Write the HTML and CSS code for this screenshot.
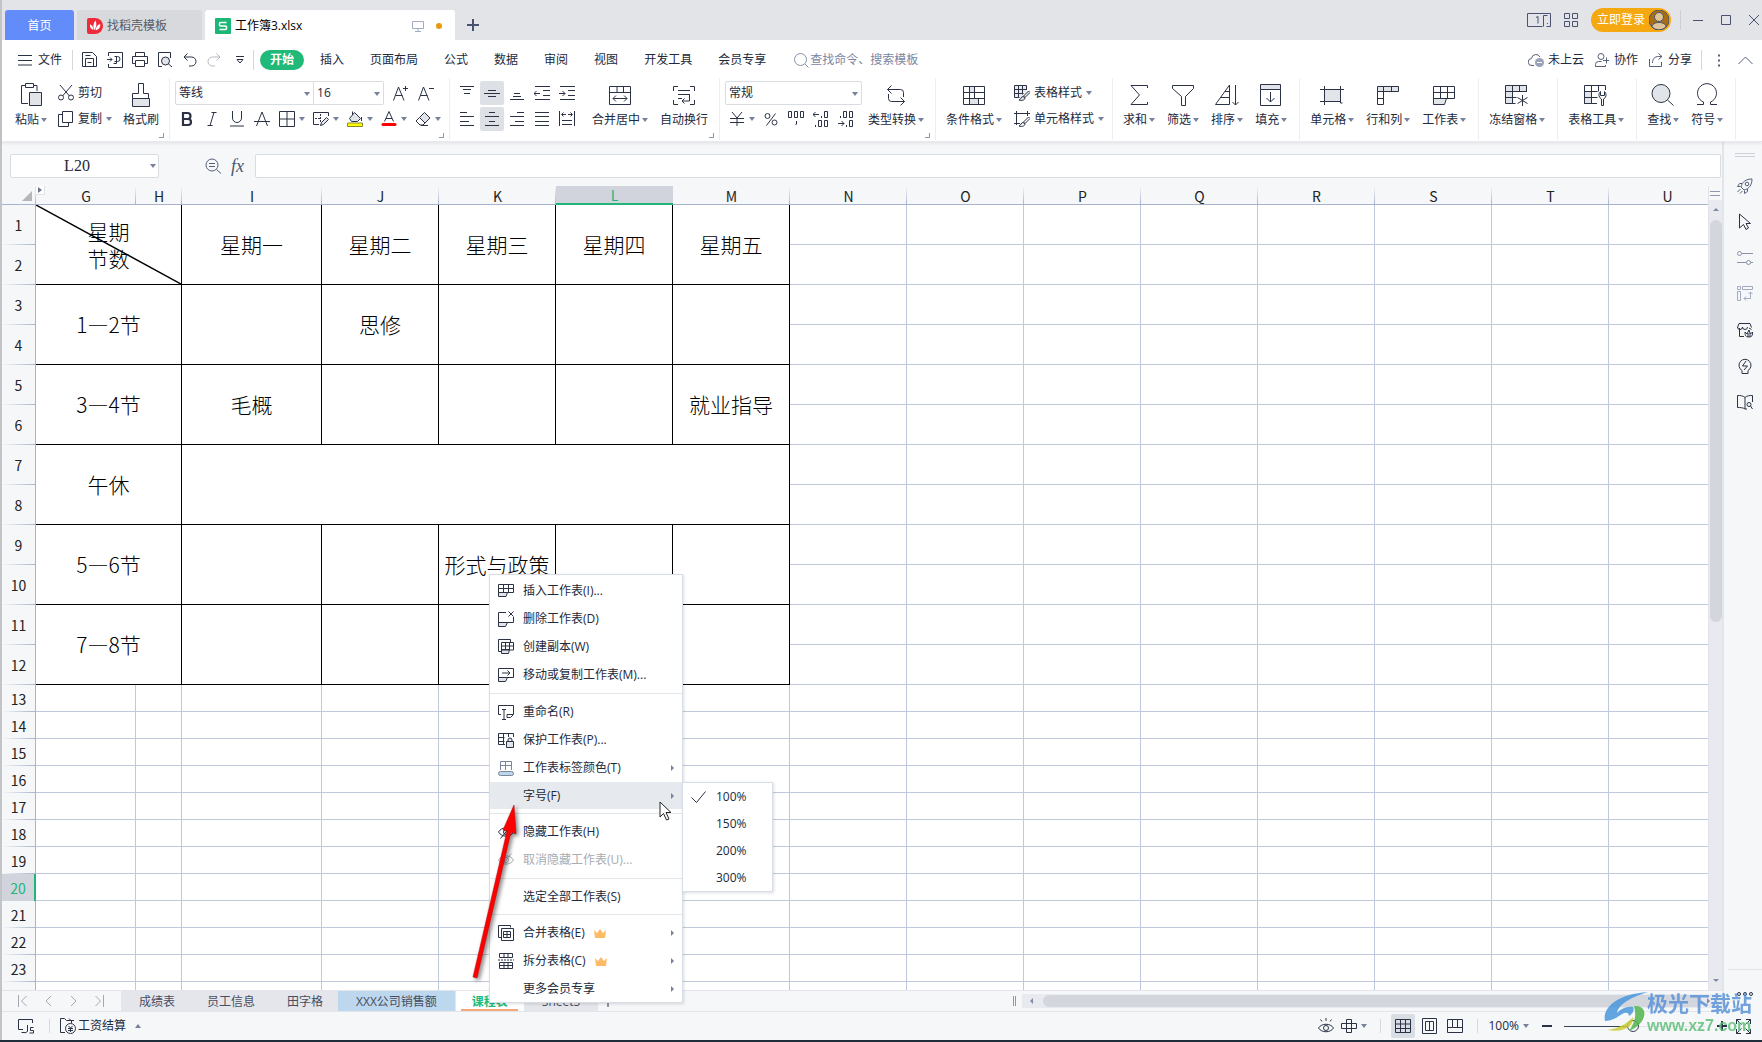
FILE: index.html
```html
<!DOCTYPE html>
<html lang="zh-CN">
<head>
<meta charset="utf-8">
<title>工作簿3.xlsx</title>
<link rel="stylesheet" href="styles.css">
</head>
<body>
<header class="titlebar">
  <nav class="doc-tabs">
    <button class="doc-tab home">首页</button>
    <button class="doc-tab docer"><svg class="plain" width="16" height="16"><path d="M0 2a2 2 0 0 1 2-2h6a8 8 0 0 1 0 16H2a2 2 0 0 1-2-2z" fill="#ef2b39"/><path d="M7.500 12C5.500 8.500 6.500 5 8.500 2.500c1.500 3 1 6.500-1 9.500zM6.500 12C3.500 11 2.700 9 3 6.300 5.200 7.300 6.300 9 6.500 12zM8.500 12.200c.3-3 2-5.500 4.700-6.200.3 3.500-1.500 5.800-4.700 6.200z" fill="#fff"/></svg>找稻壳模板</button>
    <button class="doc-tab current"><svg class="plain" width="16" height="16"><rect width="16" height="16" rx="1" fill="#1cb676"/><path d="M11.500 4.500h-6a1 1 0 0 0-1 1V7a1 1 0 0 0 1 1h5a1 1 0 0 1 1 1v1.500a1 1 0 0 1-1 1h-6" fill="none" stroke="#fff" stroke-width="1.500"/></svg><span class="doc-name">工作簿3.xlsx</span><svg width="12" height="12" class="pale"><path d="M.5 1.500h11v7H.5zM6 8.500v3M3 11.500h6"/></svg><i class="unsaved"></i></button>
  </nav>
  <button class="new-tab" aria-label="新建"><svg width="12" height="12"><path d="M6 0v12M0 6h12" stroke="#49536f" stroke-width="2"/></svg></button>
  <div class="window-tools slate">
    <button aria-label="窗口"><svg width="24" height="14"><path d="M15.500 13.500H.5V.5h23v13h-4M9 4.500l2-1v7M16.500 13.500v-11h4M20 10.500h1"/></svg></button>
    <button aria-label="应用"><svg width="14" height="14"><path d="M.5.5h5v5h-5zM8.500.5h5v5h-5zM.5 8.500h5v5h-5zM8.500 8.500h5v5h-5z"/></svg></button>
    <button class="login">立即登录<svg class="plain" width="20" height="20"><circle cx="10" cy="10" r="10" fill="#a96f10"/><circle cx="10" cy="7" r="4.500" fill="#dfc595"/><path d="M3 17c0-3 3-4.500 7-4.500s7 1.500 7 4.500a10 10 0 0 1-14 0z" fill="#dfc595"/></svg></button>
    <i class="rule"></i>
    <button aria-label="最小化"><svg width="10" height="10"><path d="M0 5.500h10"/></svg></button>
    <button aria-label="最大化"><svg width="10" height="10"><path d="M.5.5h9v9h-9z"/></svg></button>
    <button aria-label="关闭"><svg width="10" height="10"><path d="M0 0l10 10M10 0L0 10"/></svg></button>
  </div>
</header>

<div class="menubar">
  <button class="file"><svg width="14" height="12"><path d="M0 1.500h14M0 6.500h14M0 11h14"/></svg>文件</button>
  <i class="rule"></i>
  <div class="quick">
    <button aria-label="保存"><svg width="16" height="16"><path d="M.5.500h10l4 4v10H.5zM3.500 14.500v-8h8v8M3.500 3.500h5M5.500 10.500h4"/></svg></button>
    <button aria-label="输出为PDF"><svg width="16" height="16"><path d="M1.500 4V.5h14v15h-14V12M0 7.500h5M3 5.500l2 2-2 2M7.500 4.500h3a2 2 0 0 1 0 5h-3M9.500 5v6.500h-3"/></svg></button>
    <button aria-label="打印"><svg width="16" height="16"><path d="M3.500 4V.5h9V4M3.500 11.500h-3v-7h15v7h-3M3.500 8.500h9v6h-9z"/></svg></button>
    <button aria-label="打印预览"><svg width="16" height="16"><path d="M5 14.500H1.500V.5h12V6"/><circle cx="8.500" cy="9" r="4" fill="#e1e4e8"/><path d="M11.500 12l3.500 3"/></svg></button>
    <button aria-label="撤销"><svg width="14" height="14"><path d="M4.500.5L1 4l3.500 3.500M1 4h7.500a4.500 4.500 0 0 1 0 9H6"/></svg></button>
    <button aria-label="恢复" class="faint"><svg width="14" height="14"><path d="M9.500.5L13 4 9.500 7.500M13 4H5.500a4.500 4.500 0 0 0 0 9H8"/></svg></button>
    <button class="quick-more" aria-label="更多"><svg width="8" height="8"><path d="M0 .5h8M1 3.500h6L4 7z"/></svg></button>
  </div>
  <i class="rule"></i>
  <nav class="ribbon-tabs">
    <button class="on">开始</button><button>插入</button><button>页面布局</button><button>公式</button><button>数据</button><button>审阅</button><button>视图</button><button>开发工具</button><button>会员专享</button>
  </nav>
  <label class="search"><svg width="15" height="15"><circle cx="6.500" cy="6.500" r="6"/><path d="M11 11l3.500 3.500"/></svg><input type="text" aria-label="查找" placeholder="查找命令、搜索模板"></label>
  <div class="share">
    <button><svg width="16" height="14"><path d="M6 12.500H4a3.500 3.500 0 0 1-.5-7A4.500 4.500 0 0 1 12 4"/><circle cx="11.500" cy="9.500" r="4.500" fill="#9aa2b8" stroke="none"/><path d="M9 9.500h5" stroke="#fff"/></svg>未上云</button>
    <button><svg width="15" height="14"><circle cx="6" cy="3.500" r="3"/><path d="M.5 13.500v-2a3 3 0 0 1 3-3h3M.5 13.500h10V12M8 7.500h6M11.500 4.500v6"/></svg>协作</button>
    <button><svg width="15" height="14"><path d="M.5 6v7.500h12V9M3.500 10c0-4 2-6.500 6-6.500h3.500M9.500.5l3.500 3-3.500 3"/></svg>分享</button>
    <i class="rule"></i>
    <button aria-label="更多"><svg width="3" height="13" class="dots"><path d="M0 1.500h2M0 6.500h2M0 11.500h2" stroke-width="2"/></svg></button>
    <button aria-label="收起功能区"><svg width="15" height="9"><path d="M.5 8l7-7 7 7"/></svg></button>
  </div>
</div>

<div class="ribbon">
  <section class="group clip">
    <button class="big"><svg width="22" height="24"><path d="M8 20.500H1.500v-18h4M13 2.500h4V8M5.500.5h8v4h-8z"/><path d="M9.500 9.500h12v13h-12z" fill="#e1e4e8"/></svg><span>粘贴<i class="caret"></i></span></button>
    <div class="stack">
      <button class="small"><svg width="16" height="16"><path d="M2 0l9.500 11M14 0L4.500 11"/><circle cx="3" cy="12.500" r="2.500"/><circle cx="13" cy="12.500" r="2.500"/></svg>剪切</button>
      <button class="small"><svg width="16" height="16"><path d="M4.500.5h10v11h-10zM4.500 3.500h-4v12h10v-4"/></svg>复制<i class="caret"></i></button>
    </div>
    <button class="big"><svg width="18" height="24"><path d="M6.500.5h5v10h5v5H.5v-5h6z"/><path d="M.5 15.500h17v8H.5z" fill="#e1e4e8"/></svg><span>格式刷</span></button>
    <i class="launcher"></i>
  </section>
  <section class="group font">
    <div class="stack">
      <div class="line">
        <span class="combo face"><select aria-label="字体"><option>等线</option></select></span><span class="combo size"><select aria-label="字号"><option>16</option></select></span>
        <button class="tool" aria-label="增大字号"><svg width="16" height="16"><path d="M.5 15.500L5.500 2l5.500 13.500M2.500 10.500h7M10 3.500h5M12.500 1v5"/></svg></button>
        <button class="tool" aria-label="减小字号"><svg width="16" height="16"><path d="M.5 15.500L5.500 2l5.500 13.500M2.500 10.500h7M11 3.500h5"/></svg></button>
      </div>
      <div class="line">
        <button class="tool" aria-label="加粗"><svg width="16" height="16"><path d="M4 2h4.500a3 3 0 0 1 0 6H4zM4 8h5a3 3 0 0 1 0 6H4z" stroke-width="2.200"/></svg></button>
        <button class="tool" aria-label="倾斜"><svg width="16" height="16"><path d="M7.500 1.500h5M3.500 14.500h5M10 1.500l-4 13"/></svg></button>
        <button class="tool" aria-label="下划线"><svg width="16" height="16"><path d="M3.500 0v7a4.500 4.500 0 0 0 9 0V0M1 15h14"/></svg></button>
        <button class="tool" aria-label="删除线"><svg width="16" height="16"><path d="M2.500 15L8 1l5.500 14M0 10.500h16"/></svg></button>
        <button class="tool drop" aria-label="边框"><svg width="16" height="16"><path d="M.5.5h15v15H.5zM8 .5v15M.5 8h15"/></svg><i class="caret"></i></button>
        <button class="tool drop" aria-label="绘图边框"><svg width="16" height="16"><path d="M6 13.500H.5v-12h15V5"/><path d="M2 7.500h6M7.500 3v9" stroke-dasharray="2 1"/><path d="M7.500 14.500l1-3 5-5 2 2-5 5z" fill="#e1e4e8"/></svg><i class="caret"></i></button>
        <button class="tool drop" aria-label="填充颜色"><svg width="16" height="16"><path d="M2.500 7.500L7.500 1.500l6 6-3 3h-6z" fill="#e1e4e8"/><path d="M5.500 4V.5M14.500 6v4"/><path d="M.5 12h15v3.500H.5z" fill="#ff0" stroke="#8a8a30"/></svg><i class="caret"></i></button>
        <button class="tool drop" aria-label="字体颜色"><svg width="16" height="16"><path d="M3.500 10.500L8 .5l4.500 10M5 7.500h6"/><path d="M2 13.500h12" stroke="#f00" stroke-width="3" stroke-linecap="round"/></svg><i class="caret"></i></button>
        <button class="tool drop" aria-label="清除"><svg width="16" height="16"><path d="M4.500 6.500l5-5 5.500 5.500-5 5z" fill="#e1e4e8"/><path d="M4.500 6.500L1 10l4 4h3l2-2M6 14.500h7"/></svg><i class="caret"></i></button>
      </div>
    </div>
    <i class="launcher"></i>
  </section>
  <section class="group align">
    <div class="stack">
      <div class="line tight">
        <button class="tool" aria-label="顶端对齐"><svg width="16" height="16"><path d="M1 1.500h14M4 4.500h8M5 8.500h6"/></svg></button>
        <button class="tool on" aria-label="垂直居中"><svg width="16" height="16"><path d="M4 5.500h8M0 8.500h16M4 11.500h8"/></svg></button>
        <button class="tool" aria-label="底端对齐"><svg width="16" height="16"><path d="M5 8.500h6M4 11.500h8M1 14.500h14"/></svg></button>
        <button class="tool" aria-label="减少缩进"><svg width="16" height="16"><path d="M1 1.500h15M9 5.500h7M9 10.500h7M1 14.500h15M0 8.500h6M2.500 6L0 8.500 2.500 11"/></svg></button>
        <button class="tool" aria-label="增加缩进"><svg width="16" height="16"><path d="M1 1.500h15M9 5.500h7M9 10.500h7M1 14.500h15M0 8.500h6M3.500 6L6 8.500 3.500 11"/></svg></button>
      </div>
      <div class="line tight">
        <button class="tool" aria-label="左对齐"><svg width="16" height="16"><path d="M1 1.500h7M1 5.500h14M1 10.500h9M1 14.500h14"/></svg></button>
        <button class="tool on" aria-label="水平居中"><svg width="16" height="16"><path d="M5 1.500h6M1 5.500h14M5 10.500h6M1 14.500h14"/></svg></button>
        <button class="tool" aria-label="右对齐"><svg width="16" height="16"><path d="M8 1.500h7M1 5.500h14M6 10.500h9M1 14.500h14"/></svg></button>
        <button class="tool" aria-label="两端对齐"><svg width="16" height="16"><path d="M1 1.500h14M1 5.500h14M1 10.500h14M1 14.500h14"/></svg></button>
        <button class="tool" aria-label="分散对齐"><svg width="16" height="16"><path d="M.5 0v15M15.500 0v15M3 3.500h4M9 3.500h4M4.500 1.500l-2 2 2 2M11.500 1.500l2 2-2 2M3 9.500h10M3 13.500h10"/></svg></button>
      </div>
    </div>
    <button class="big"><svg width="22" height="24"><path d="M.5 3.500h21v18H.5zM.5 9.500h21M8 3.500v6M14.500 3.500v6M4 15.500h14M7 12.500l-3 3 3 3M15 12.500l3 3-3 3"/></svg><span>合并居中<i class="caret"></i></span></button>
    <button class="big"><svg width="22" height="24"><path d="M5 3.500H.5V8M17 3.500h4.500V8M5 21.500H.5V17M17 21.500h4.500V17M5 7.500h12M5 11.500h12M5 15.500h4M16.500 11.500V18H9M11.500 15.500L9 18l2.500 2.500"/></svg><span>自动换行</span></button>
    <i class="launcher"></i>
  </section>
  <section class="group number">
    <div class="stack">
      <span class="combo format"><select aria-label="数字格式"><option>常规</option></select></span>
      <div class="line tight">
        <button class="tool drop" aria-label="货币"><svg width="16" height="16"><path d="M3 1l5 6 5-6M1 7.500h14M1 11.500h14M8 7v8"/></svg><i class="caret"></i></button>
        <button class="tool" aria-label="百分比"><svg width="14" height="16"><circle cx="3.500" cy="5" r="2.500"/><circle cx="10.500" cy="11.500" r="2.500"/><path d="M11.500 2.500l-9 12"/></svg></button>
        <button class="tool" aria-label="千位分隔"><svg width="18" height="16"><path d="M1.500.5h3v6h-3zM7.500.5h3v6h-3zM13.500.5h3v6h-3zM9.500 10v3l-1 1"/></svg></button>
        <button class="tool" aria-label="增加小数"><svg width="16" height="16"><path d="M0 3.500h6M2.500 1L0 3.500 2.500 6M8.500 5v2M11.500.5h3v6h-3zM2.500 14v2M5.500 9.500h3v6h-3zM11.500 9.500h3v6h-3z"/></svg></button>
        <button class="tool" aria-label="减少小数"><svg width="16" height="16"><path d="M2.500 5v2M5.500.5h3v6h-3zM11.500.5h3v6h-3zM0 12.500h6M3.500 10L6 12.500 3.500 15M8.500 14v2M11.500 9.500h3v6h-3z"/></svg></button>
      </div>
    </div>
    <button class="big"><svg width="20" height="24"><path d="M5.500 2.500l-4 4 4 4M1.500 6.500h13a3 3 0 0 1 3 3V14M14.500 14.500l4 4-4 4M18.500 18.500h-13a3 3 0 0 1-3-3V11"/></svg><span>类型转换<i class="caret"></i></span></button>
    <i class="launcher"></i>
  </section>
  <section class="group format-styles">
    <button class="big"><svg width="22" height="24"><path d="M6.500 3.500h5v6h-5zM6.500 15.500h9v6h-9z" fill="#e1e4e8"/><path d="M.5 3.500h21v18H.5zM.5 9.500h21M.5 15.500h21M6.500 3.500v18M11.500 3.500v6M11.500 9.500v6M15.500 15.500v6"/></svg><span>条件格式<i class="caret"></i></span></button>
    <div class="stack">
      <button class="small"><svg width="16" height="16"><path d="M.5.5h12v12H.5z" fill="#e9ebee" stroke="none"/><path d="M9 16l-1-5 5-5h3v10z" fill="#fff" stroke="none"/><path d="M12.500 5V.500H.5v12h5M.5 4.500h12M.5 8.500h9M4.500.5v12M8.500.5v9"/><path d="M9.500 11l5-5 1.500 1.500-5 5zM9 11.500c-2 0-2 3-4 3.500 3 1 6 0 6-2z" fill="#e1e4e8"/></svg>表格样式<i class="caret"></i></button>
      <button class="small"><svg width="16" height="16"><path d="M2.500 0v14M0 2.500h16M13.500 0v5M0 12.500h6M9.500 11l5-5 1.500 1.500-5 5zM9 11.500c-2 0-2 3-4 3.500 3 1 6 0 6-2z"/></svg>单元格样式<i class="caret"></i></button>
    </div>
  </section>
  <section class="group">
    <button class="big"><svg width="18" height="24"><path d="M17.500 5V2.500H1l8.500 9.500L1 21.500h16.500V19"/></svg><span>求和<i class="caret"></i></span></button>
    <button class="big"><svg width="22" height="24"><path d="M.5 2.500h21v3l-8 8v9h-4v-9l-9-8z"/></svg><span>筛选<i class="caret"></i></span></button>
    <button class="big"><svg width="24" height="24"><path d="M.5 21.500L14.500 2v19.500zM10 8.500h4.500M6 14.500h8.500M20.500 2v20M17.500 19l3 3 3-3"/></svg><span>排序<i class="caret"></i></span></button>
    <button class="big"><svg width="22" height="24"><path d="M.5 1.500h20v5H.5z" fill="#e1e4e8"/><path d="M.5 6.500v16h20v-16M10.500 9v10M6.500 15l4 4 4-4"/></svg><span>填充<i class="caret"></i></span></button>
  </section>
  <section class="group">
    <button class="big"><svg width="24" height="24"><path d="M4.500 6.500h16v12h-16z" fill="#e1e4e8"/><path d="M0 6.500h24M0 18.500h18M4.500 3v19M20.500 3v13M20.500 18v2h2" /></svg><span>单元格<i class="caret"></i></span></button>
    <button class="big"><svg width="22" height="24"><path d="M.5 3.500h21v5H.5z" fill="#e1e4e8"/><path d="M.5 8.500v13h6v-18M14.500 3.500v5M.5 15.500h6"/></svg><span>行和列<i class="caret"></i></span></button>
    <button class="big"><svg width="22" height="24"><path d="M.5 15.500h13l-2 6H.5z" fill="#e1e4e8"/><path d="M.5 15.500v-12h21v12H.5M.5 9.500h21M7.500 3.500v12M14.500 3.500v12"/></svg><span>工作表<i class="caret"></i></span></button>
  </section>
  <section class="group">
    <button class="big"><svg width="24" height="24"><path d="M.5 2.500h21v6h-14v12h-7z" fill="#e1e4e8"/><path d="M.5 8.500h21v-6M.5 14.500h11M7.500 2.500v18h3M14.500 2.500v6M17.500 12v11M12.500 14.500l10 6M22.500 14.500l-10 6"/></svg><span>冻结窗格<i class="caret"></i></span></button>
  </section>
  <section class="group">
    <button class="big"><svg width="24" height="24"><path d="M.5 8.500h7v12h-7z" fill="#e1e4e8"/><path d="M13 20.500H.5v-18h21V7M.5 8.500h13M.5 14.500h13M7.500 2.500v18M14.500 2.500v6M17.500 22.500V16a4.500 4.500 0 0 1-1-7.500v4h4v-4a4.500 4.500 0 0 1-1 7.500v6.500z"/></svg><span>表格工具<i class="caret"></i></span></button>
  </section>
  <section class="group">
    <button class="big"><svg width="24" height="24"><circle cx="10" cy="10.500" r="9" fill="#e1e4e8"/><path d="M16.500 17l6 5.500"/></svg><span>查找<i class="caret"></i></span></button>
    <button class="big"><svg width="22" height="24"><path d="M1 21.500h6.500V19A9.500 9.500 0 1 1 14.500 19v2.500H21"/></svg><span>符号<i class="caret"></i></span></button>
  </section>
</div>

<div class="workspace">
  <main class="book">
    <div class="formula-bar">
      <span class="name-box"><input type="text" aria-label="名称框" value="L20"><i class="caret"></i></span>
      <button aria-label="公式查找"><svg width="16" height="16" class="soft"><circle cx="7" cy="7" r="6"/><path d="M11.500 11.500L16 15.500M4 5.500h6M4 8.500h6"/></svg></button>
      <button class="fx">fx</button>
      <input class="formula" type="text" aria-label="编辑栏">
    </div>
    <div class="sheet-area">
      <div class="sheet">
        <i class="unhide"><svg width="8" height="8" class="plain"><path d="M2 1v6l4-3z" fill="#6d7890"/></svg></i>
        <table>
          <colgroup><col class="c-head"><col class="c-g"><col class="c-h"><col class="c-i"><col span="12"></colgroup>
          <thead><tr><th class="corner"><svg width="10" height="10" class="plain"><path d="M10 0v10H0z" fill="#b4b6ba"/></svg></th><th>G<th>H<th>I<th>J<th>K<th class="sel">L<th>M<th>N<th>O<th>P<th>Q<th>R<th>S<th>T<th>U</tr></thead>
          <tbody class="timetable">
            <tr><th>1<td class="b slash" colspan="2" rowspan="2"><svg viewBox="0 0 100 100" preserveAspectRatio="none"><path d="M0 0l100 100"/></svg>星期<br>节数<td class="b" rowspan="2">星期一<td class="b" rowspan="2">星期二<td class="b" rowspan="2">星期三<td class="b" rowspan="2">星期四<td class="b" rowspan="2">星期五<td><td><td><td><td><td><td><td></tr>
            <tr><th>2<td><td><td><td><td><td><td><td></tr>
            <tr><th>3<td class="b" colspan="2" rowspan="2">1—2节<td class="b" rowspan="2"><td class="b" rowspan="2">思修<td class="b" rowspan="2"><td class="b" rowspan="2"><td class="b" rowspan="2"><td><td><td><td><td><td><td><td></tr>
            <tr><th>4<td><td><td><td><td><td><td><td></tr>
            <tr><th>5<td class="b" colspan="2" rowspan="2">3—4节<td class="b" rowspan="2">毛概<td class="b" rowspan="2"><td class="b" rowspan="2"><td class="b" rowspan="2"><td class="b" rowspan="2">就业指导<td><td><td><td><td><td><td><td></tr>
            <tr><th>6<td><td><td><td><td><td><td><td></tr>
            <tr><th>7<td class="b" colspan="2" rowspan="2">午休<td class="b" colspan="5" rowspan="2"><td><td><td><td><td><td><td><td></tr>
            <tr><th>8<td><td><td><td><td><td><td><td></tr>
            <tr><th>9<td class="b" colspan="2" rowspan="2">5—6节<td class="b" rowspan="2"><td class="b" rowspan="2"><td class="b" rowspan="2">形式与政策<td class="b" rowspan="2"><td class="b" rowspan="2"><td><td><td><td><td><td><td><td></tr>
            <tr><th>10<td><td><td><td><td><td><td><td></tr>
            <tr><th>11<td class="b" colspan="2" rowspan="2">7—8节<td class="b" rowspan="2"><td class="b" rowspan="2"><td class="b" rowspan="2"><td class="b" rowspan="2"><td class="b" rowspan="2"><td><td><td><td><td><td><td><td></tr>
            <tr><th>12<td><td><td><td><td><td><td><td></tr>
          </tbody>
          <tbody>
            <tr><th>13<td><td><td><td><td><td><td><td><td><td><td><td><td><td><td></tr>
            <tr><th>14<td><td><td><td><td><td><td><td><td><td><td><td><td><td><td></tr>
            <tr><th>15<td><td><td><td><td><td><td><td><td><td><td><td><td><td><td></tr>
            <tr><th>16<td><td><td><td><td><td><td><td><td><td><td><td><td><td><td></tr>
            <tr><th>17<td><td><td><td><td><td><td><td><td><td><td><td><td><td><td></tr>
            <tr><th>18<td><td><td><td><td><td><td><td><td><td><td><td><td><td><td></tr>
            <tr><th>19<td><td><td><td><td><td><td><td><td><td><td><td><td><td><td></tr>
            <tr><th class="sel">20<td><td><td><td><td><td><td><td><td><td><td><td><td><td><td></tr>
            <tr><th>21<td><td><td><td><td><td><td><td><td><td><td><td><td><td><td></tr>
            <tr><th>22<td><td><td><td><td><td><td><td><td><td><td><td><td><td><td></tr>
            <tr><th>23<td><td><td><td><td><td><td><td><td><td><td><td><td><td><td></tr>
            <tr><th><td><td><td><td><td><td><td><td><td><td><td><td><td><td><td></tr>
          </tbody>
        </table>
      </div>
      <div class="vscroll"><i class="split"></i><i class="up"></i><i class="thumb"></i><i class="down"></i></div>
    </div>
    <div class="sheet-bar">
      <div class="sheet-nav">
        <button aria-label="第一张"><svg width="9" height="12"><path d="M.5 0v12M8.500 1L3.500 6l5 5"/></svg></button>
        <button aria-label="上一张"><svg width="7" height="12"><path d="M6 1L1 6l5 5"/></svg></button>
        <button aria-label="下一张"><svg width="7" height="12"><path d="M1 1l5 5-5 5"/></svg></button>
        <button aria-label="最后一张"><svg width="9" height="12"><path d="M.5 1l5 5-5 5M8.500 0v12"/></svg></button>
      </div>
      <nav class="sheet-tabs">
        <button>成绩表</button><button>员工信息</button><button>田字格</button><button class="blue">XXX公司销售额</button><button class="active">课程表</button><button class="last">Sheet5</button>
      </nav>
      <button class="add" aria-label="新建工作表"><svg width="12" height="12"><path d="M6 0v12M0 6.500h12"/></svg></button>
      <div class="hscroll"><i class="grip"></i><div class="track"><i class="left"></i><i class="thumb"></i><i class="right"></i></div></div>
    </div>
  </main>
  <aside class="sidebar">
    <i class="handle"></i>
    <div class="side-tools">
      <button aria-label="快捷"><svg width="16" height="16" class="soft"><path d="M4 9C5 4 9 1 15 1c0 6-3 10-8 11zM5 5.500H2.500L.5 8.500h3M10.500 11v2.500l-3 2v-3"/><circle cx="10" cy="6" r="1.800"/><path d="M3.500 11l-3 3M5.500 13l-2.500 2.500"/></svg></button>
      <button aria-label="选择"><svg width="14" height="18"><path d="M1.500 1v14l4-3.500 2.500 5 2.500-1.500-2.500-4.500h4.500z"/></svg></button>
      <button aria-label="属性" class="mid"><svg width="16" height="16"><circle cx="2.500" cy="3.500" r="2"/><circle cx="11.500" cy="12.500" r="2"/><path d="M5 3.500h11M0 12.500h9M14 12.500h2"/></svg></button>
      <button aria-label="分析" class="pale"><svg width="16" height="16"><path d="M.5.5h3v3h-3zM.5 5.500h3v9h-3zM5.500.500h10v3h-10zM13.500 6v6.500H7M11.500 8l2-2 2 2M9 10.500l-2 2 2 2"/></svg></button>
      <button aria-label="稻壳资源"><svg width="16" height="16"><path d="M2.500 6v8.500H7M.5 5.500L2 1.500h11l1.500 4M.5 5a2.500 2.500 0 0 0 5 0 2.500 2.500 0 0 0 5 0M12 6l2.500 1.500"/><path d="M8 10c0 4 1 5 4 5s4-2 3.500-5l-2 2-1.500-4-2 4zM11 11v4M13 11v4"/></svg></button>
      <button aria-label="灵感"><svg width="16" height="16"><path d="M5 12.500a6 6 0 1 1 6 0v3H5zM9 3L5.500 8h5L7 12"/></svg></button>
      <button aria-label="帮助"><svg width="16" height="16"><path d="M8 3.500C6 1.500 3 1.500.5 1.500v12c2.500 0 5.500 0 7.500 1.500zM8 3.500c2-2 5-2 7.500-2V8M8 15h2"/><circle cx="12" cy="10.500" r="2"/><path d="M13.500 12l2 3"/></svg></button>
    </div>
    <button class="side-more" aria-label="更多"><svg width="16" height="4"><circle cx="2" cy="2" r="1.500"/><circle cx="8" cy="2" r="1.500"/><circle cx="14" cy="2" r="1.500"/></svg></button>
  </aside>
</div>

<footer class="statusbar">
  <button aria-label="宏"><svg width="17" height="16"><path d="M5 11.500H.5v-10h14V5M3.500 14.500H7M9.500 7v6.500L7 15M15.500 9.500h-3v3h3v2.500h-4"/></svg></button>
  <i class="rule"></i>
  <button class="payroll"><svg width="16" height="16"><path d="M5 14.500H.5V.5h4l2 2h5V5M9 .5l2 2h3"/><circle cx="10.500" cy="10.500" r="5"/><path d="M8.500 8l2 2 2-2M8 10.500h5M8 12.500h5M10.500 10.500V14"/></svg>工资结算</button><i class="caret flip"></i>
  <div class="view-tools">
    <button aria-label="护眼模式"><svg width="16" height="16"><path d="M.5 10c3-5 12-5 15 0-3 5-12 5-15 0zM8 0v3M2.500 1.500l1.500 2M13.500 1.500l-1.500 2"/><circle cx="8" cy="10" r="2.500"/></svg></button>
    <button class="cross" aria-label="阅读模式"><svg width="16" height="16"><path d="M5.500 1.500h5v13h-5zM.5 5.500h15v5H.5z"/></svg><i class="caret"></i></button>
    <i class="rule"></i>
    <button class="view on" aria-label="普通视图"><svg width="16" height="14"><path d="M.5.5h15v13H.5zM.5 5h15M.5 9.500h15M5.500.5v13M10.500.5v13"/></svg></button>
    <button class="view" aria-label="页面布局"><svg width="15" height="16"><path d="M.5.5h14v15H.5zM3.500 3.500h8v9h-8zM7.500 3.500v9"/></svg></button>
    <button class="view" aria-label="分页预览"><svg width="16" height="14"><path d="M.5.5h15v13H.5zM5.500.500v8h10M10.500.500v8M.5 8.500h5"/></svg></button>
    <i class="rule"></i>
    <button class="zoom-value">100%<i class="caret"></i></button>
    <button aria-label="缩小"><svg width="10" height="2"><path d="M0 1h10" stroke-width="2"/></svg></button>
    <input class="zoom" type="range" min="0" max="100" value="49" aria-label="显示比例">
    <button aria-label="放大"><svg width="10" height="10"><path d="M0 5h10M5 0v10" stroke-width="2"/></svg></button>
    <button aria-label="全屏"><svg width="15" height="15"><path d="M.5 5V.5H5M10 .5h4.500V5M14.500 10v4.500H10M5 14.500H.5V10M.5.500l5 5M14.500.500l-5 5M14.500 14.500l-5-5M.5 14.500l5-5"/></svg></button>
  </div>
</footer>

<div class="menu context">
  <button><svg width="16" height="16"><path d="M.5 9.500h9l-1.500 4H.5z" fill="#e1e4e8"/><path d="M.5 9.500v-8h15v8H.5M.5 5.500h15M5.500 1.500v8M10.500 1.500v8"/></svg>插入工作表(I)...</button>
  <button><svg width="16" height="16"><path d="M.5 11.500h9l-2 4h-7z" fill="#e1e4e8"/><path d="M8 1.500H.5v10h15V6M10.500.5l5 5M15.500.5l-5 5"/></svg>删除工作表(D)</button>
  <button><svg width="16" height="16"><path d="M3.500 10.500h8l-1 4h-7z" fill="#e1e4e8"/><path d="M3.500 12.500h-3V.5h12v3M3.500 3.500h12v7.500h-12zM3.500 7h12M7.500 3.500V11M11.500 3.500V11"/></svg>创建副本(W)</button>
  <button><svg width="16" height="16"><path d="M.5 10.500h9l-2 4h-7z" fill="#e1e4e8"/><path d="M.5 10.500v-9h15v9H.5M4 6h8M9.500 3.500L12 6 9.500 8.500"/></svg>移动或复制工作表(M)...</button>
  <hr>
  <button><svg width="16" height="16"><path d="M3 10.500H.5v-9h15v9l-3 3H9V10.500h6M6 5.500v10M4 5.500h4M4 15.500h4"/></svg>重命名(R)</button>
  <button><svg width="16" height="16"><path d="M7 12.500H.5v-11h15V5M.5 5.500h6M.5 9.500h6M5.500 1.500v11M10.500 1.500V5"/><path d="M8.500 9.500h7v6h-7zM10 9.500V8a2 2 0 0 1 4 0v1.500" fill="#e1e4e8"/></svg>保护工作表(P)...</button>
  <button><svg width="16" height="16"><path d="M2.500 10V1.500h11V10M2.500 5.500h11M7.500 1.500V10" stroke="#7c8498"/><rect x=".5" y="11.500" width="15" height="4" rx="2" fill="#bcd6ee" stroke="#7c8498"/></svg>工作表标签颜色(T)<i class="more"></i></button>
  <button class="short on"><span class="blank"></span>字号(F)<i class="more"></i></button>
  <hr>
  <button><svg width="16" height="16"><path d="M.5 8c3-5.500 12-5.500 15 0-3 5.500-12 5.500-15 0zM13.500 1.500l-11 13"/><circle cx="8" cy="8" r="2.500"/></svg>隐藏工作表(H)</button>
  <button class="off" disabled><svg width="16" height="16"><path d="M.5 8c3-5.500 12-5.500 15 0-3 5.500-12 5.500-15 0zM13.500 1.500l-11 13"/><circle cx="8" cy="8" r="2.500"/></svg>取消隐藏工作表(U)...</button>
  <hr>
  <button class="short"><span class="blank"></span>选定全部工作表(S)</button>
  <hr>
  <button><svg width="16" height="16"><path d="M3 12.500H.5V.5h12v2M3.500 3.500h12v12h-12zM5.500 6.500h7v6h-7zM5.500 9.500h7M9 6.500v6"/></svg>合并表格(E)<svg class="crown plain" width="12" height="9"><path d="M0 1l3 3 3-4 3 4 3-3-1 8H1z" fill="#fdbb68"/></svg><i class="more"></i></button>
  <button><svg width="16" height="16"><path d="M1.500.5h13v4h-13zM6 .5v4M10 .5v4M1.500 9.500h13v6h-13zM1.500 12.500h13M6 9.500v6M10 9.500v6"/><path d="M0 7h16" stroke-dasharray="2 1"/></svg>拆分表格(C)<svg class="crown plain" width="12" height="9"><path d="M0 1l3 3 3-4 3 4 3-3-1 8H1z" fill="#fdbb68"/></svg><i class="more"></i></button>
  <button class="short"><span class="blank"></span>更多会员专享<i class="more"></i></button>
</div>
<div class="menu scale">
  <button><svg width="15" height="12"><path d="M.5 6.500l5 5L14.500.5"/></svg>100%</button>
  <button><span class="blank"></span>150%</button>
  <button><span class="blank"></span>200%</button>
  <button><span class="blank"></span>300%</button>
</div>
<svg class="pointer plain" width="14" height="21"><path d="M1 1v15l3.500-3.500 3 6.500 2.500-1-3-6.500h5z" fill="#fff" stroke="#222"/></svg>
<svg class="callout plain" width="56" height="184"><path d="M3 173l34-146-4-1L44 1l2 29-5-2L7 174z" fill="#f00" stroke="#b00" stroke-width=".5"/></svg>
<div class="watermark">
  <svg class="plain" width="48" height="42"><path d="M2 29C-1 16 14 2 45 0 26 6 12 14 14 25c-5 3-9 4-12 4z" fill="#4a97dc"/><path d="M10 27c3-8 12-13 20-12 2 4-1 7-4 9 0-3-2-4-5-3-4 2-7 5-11 6z" fill="#4a97dc"/><path d="M31 14c16-1 13 18-5 25 5-8 8-13 5-25z" fill="#52b54c"/><path d="M4 38c10-1 20-6 26-13 1 9-8 16-26 13z" fill="#c8ce35"/></svg>
  <div><b>极光下载站</b><span>www.xz7.com</span></div>
</div>
</body>
</html>
```

FILE: styles.css
```css
* { box-sizing: border-box; }
body {
  margin: 0;
  height: 100vh;
  padding-left: 2px;
  display: flex;
  flex-direction: column;
  position: relative;
  overflow: hidden;
  background: #c3c4c7;
  border-bottom: 2px solid #1f2d3b;
  color: #22293b;
  font: 12px/16px "Open Sans", "Noto Sans CJK SC", sans-serif;
}
button, input, select { font: inherit; color: inherit; border: 0; padding: 0; margin: 0; background: none; }
button { display: flex; align-items: center; white-space: nowrap; flex: none; }
input, select { outline: 0; min-width: 0; }
svg { flex: none; display: block; fill: none; stroke: #2b3245; }
svg.plain { stroke: none; }
i { flex: none; display: block; }
.slate svg { stroke: #49536f; }
svg.soft { stroke: #56607a; }
.mid svg { stroke: #8a92a6; }
svg.pale, .pale svg { stroke: #a3abc0; }
.faint svg { stroke: #b5b8bf; }
.rule { width: 1px; height: 20px; background: #d5d8dd; }
.caret { width: 0; border: 3px solid transparent; border-top: 4px solid #77819b; border-bottom: 0; margin-left: 2px; }
.caret.flip { border-top: 0; border-bottom: 4px solid #77819b; }

/* title bar */
.titlebar { display: flex; height: 40px; background: #e2e4e8; padding-left: 3px; }
.doc-tabs { display: flex; gap: 3px; align-items: flex-end; }
.doc-tab { height: 30px; border-radius: 3px 3px 0 0; padding: 1px 10px 0; gap: 4px; }
.home { width: 69px; justify-content: center; background: #628cfa; color: #fff; }
.docer { width: 125px; background: #d8d9dc; color: #555b66; }
.current { width: 250px; background: #fff; color: #000; }
.doc-name { flex: 1; text-align: left; }
.unsaved { width: 6px; height: 6px; border-radius: 50%; background: #e89a0c; margin: 0 3px 0 8px; }
.new-tab { margin: 10px 0 0 12px; }
.window-tools { display: flex; align-items: center; margin-left: auto; gap: 18px; padding-right: 3px; }
.window-tools button:first-child { margin-right: -5px; }
.login { height: 24px; width: 80px; justify-content: space-between; padding: 0 2px 0 6px; border-radius: 12px; background: #f5a80f; color: #fff; margin: 0 -9px 0 -5px; }
.window-tools .rule { margin-right: -6px; background: #cccfd5; }

/* menu bar */
.menubar { display: flex; align-items: center; height: 38px; background: #fff; padding: 2px 0 0 16px; }
.file { gap: 6px; margin-right: 10px; }
.quick { display: flex; align-items: center; gap: 9px; padding: 0 8px 0 9px; }
.quick button { min-width: 15px; justify-content: center; }
.quick .quick-more { min-width: 19px; margin-right: -4px; }
.ribbon-tabs { display: flex; gap: 26px; align-items: center; margin-left: 6px; }
.ribbon-tabs .on { background: #21b978; color: #fff; font-weight: 700; border-radius: 10px; height: 20px; padding: 0 10px; margin-right: -10px; }
.search { display: flex; align-items: center; gap: 1px; margin-left: 28px; }
.search svg { stroke: #8791aa; }
.search input { width: 120px; }
.search input::placeholder { color: #7b86a3; opacity: 1; }
.share { display: flex; align-items: center; gap: 11px; margin-left: auto; padding-right: 9px; }
.share button { gap: 4px; }
.share svg { stroke: #56607a; }
.share .rule { margin: 0 5px 0 -2px; }
.share .dots { margin-right: 6px; }

/* ribbon */
.ribbon { display: flex; height: 64px; background: #fff; border-bottom: 1px solid #e6e8eb; box-shadow: 0 2px 3px #0001; position: relative; }
.group { position: relative; display: flex; align-items: flex-start; gap: 12px; flex: none; height: 62px; padding: 3px 12px 0 10px; border-right: 1px solid #eceef0; }
.big { flex-direction: column; gap: 5px; padding-top: 2px; }
.big span { display: flex; align-items: center; }
.stack { display: flex; flex-direction: column; gap: 2px; }
.line { display: flex; gap: 1px; }
.small { height: 24px; gap: 4px; }
.small .caret { margin-left: 0; }
.tool { height: 24px; width: 24px; justify-content: center; }
.tool.on { background: #dde1e6; border-radius: 2px; }
.tool.drop { width: 33px; gap: 2px; }
.clip { padding-left: 13px; padding-right: 10px; gap: 11px; }
.group.font { padding-left: 5px; padding-right: 5px; width: 280px; }
.group.align { padding-left: 5px; padding-right: 9px; width: 270px; }
.group.align .big:nth-child(2) { margin-left: 1px; }
.group.number { padding-left: 5px; width: 216px; gap: 6px; }
.format-styles { padding-right: 8px; }
.combo { position: relative; display: flex; align-items: center; height: 24px; border: 1px solid #d9dce1; border-radius: 2px; }
.combo::after { content: ""; position: absolute; right: 3px; top: 10px; border: 3px solid transparent; border-top: 4px solid #77819b; border-bottom: 0; }
.combo select { appearance: none; width: 100%; padding-left: 3px; }
.combo.face { width: 139px; border-radius: 2px 0 0 2px; }
.combo.size { width: 70px; margin-left: -1px; margin-right: 4px; border-left: 0; border-radius: 0 2px 2px 0; }
.combo.format { width: 137px; }
.launcher { position: absolute; right: 5px; bottom: 2px; width: 5px; height: 5px; border: solid #8f97a8; border-width: 0 1px 1px 0; }

/* workspace */
.workspace { display: flex; flex: 1; min-height: 0; }
.book { flex: 1; min-width: 0; display: flex; flex-direction: column; background: #f5f7f9; }
.formula-bar { display: flex; align-items: center; height: 44px; padding: 3px 1px 0 8px; }
.name-box { display: flex; align-items: center; width: 149px; height: 24px; padding-right: 2px; margin-right: 46px; background: #fff; border: 1px solid #d9dce1; border-radius: 2px; }
.name-box input { flex: 1; padding-right: 5px; text-align: center; font: 16px/20px "Liberation Serif", serif; }
.fx { width: 16px; margin: 0 8px 0 10px; font: italic 18px/20px "Liberation Serif", serif; color: #4d566c; }
.formula { flex: 1; height: 24px; background: #fff; border: 1px solid #d9dce1; border-radius: 2px; }
.sheet-area { flex: 1; min-height: 0; display: flex; }
.sheet { flex: 1; min-width: 0; position: relative; overflow: hidden; background: #fff; }
.unhide { position: absolute; left: 34px; top: 0; width: 8px; height: 8px; background: #fff; outline: 1px solid #dfe2e8; }
table { border-collapse: separate; border-spacing: 0; table-layout: fixed; width: 1724px; font-family: "Noto Sans CJK SC", sans-serif; }
col { width: 117px; }
.c-head { width: 34px; }
.c-g { width: 100px; }
.c-h { width: 46px; }
.c-i { width: 140px; }
th, td { padding: 0; text-align: center; height: 27px; border: solid #c0c8dc; border-width: 0 1px 1px 0; }
th { font-size: 14px; line-height: 16px; font-weight: 400; color: #222; background: linear-gradient(to right, #f5f7f9, #aab4cf) bottom / 100% 1px no-repeat #f5f7f9; border-color: #a9b3d0; border-width: 0 1px 0 0; }
thead th { height: 19px; padding-top: 1px; border-width: 0 0 1px 0; background: linear-gradient(#f5f7f9, #aab4cf) right / 1px 100% no-repeat #f5f7f9; }
th.sel { background: #d1d4dc; color: #21b57b; border-right: 2px solid #21b57b; }
thead th.sel { border-right: 0; border-bottom: 2px solid #21b57b; padding-top: 0; }
.corner svg { margin-left: 20px; }
.timetable th, .timetable td { height: 40px; }
.timetable td { font-size: 21px; line-height: 27px; font-weight: 300; color: #000; white-space: nowrap; }
.timetable .b { border-color: #000; }
.slash { position: relative; }
.slash svg { position: absolute; inset: 0; width: 100%; height: 100%; stroke: #000; }
.slash path { vector-effect: non-scaling-stroke; stroke-width: 1.5px; }

/* scroll bars */
.vscroll { flex: none; width: 14px; display: flex; flex-direction: column; align-items: center; background: #e8eaef; border-left: 1px solid #e2e4ea; }
.split { width: 100%; height: 14px; background: #f5f7f9; position: relative; }
.split::after { content: ""; position: absolute; left: 1px; top: 5px; width: 10px; height: 3px; border: solid #8d98ad; border-width: 1px 0; }
.up, .down { border: 3px solid transparent; }
.up { border-bottom: 3px solid #7f8ba6; border-top: 0; margin: 8px 0 9px; }
.down { border-top: 3px solid #7f8ba6; border-bottom: 0; margin: auto 0 8px; }
.vscroll .thumb { width: 12px; height: 50%; border-radius: 6px; background: #d3d6dd; }

/* sheet tabs */
.sheet-bar { display: flex; height: 22px; border: solid #e3e5ea; border-width: 1px 0; }
.sheet-nav { display: flex; align-items: center; gap: 18px; width: 119px; padding-left: 16px; }
.sheet-nav svg { stroke: #a4a8b0; }
.sheet-tabs { display: flex; background: #e5e6eb; padding-left: 2px; color: #474e60; }
.sheet-tabs button { padding: 2px 16px 0; }
.sheet-tabs .blue { background: #bdd7ef; margin: 0 1px 0 -1px; padding: 2px 18px 0; }
.sheet-tabs .active { background: linear-gradient(#f4a77c, #f4a77c) bottom / 57px 2px no-repeat #fff; color: #21b978; font-weight: 700; }
.sheet-tabs .last { padding: 2px 18px 0; }
.add { margin-left: 4px; }
.hscroll { display: flex; align-items: center; width: 709px; margin-left: auto; }
.grip { width: 3px; height: 10px; border: solid #8d98ad; border-width: 0 1px; margin-right: 6px; }
.track { flex: 1; display: flex; align-items: center; height: 14px; background: #e8eaef; }
.track .thumb { flex: 1; height: 12px; border-radius: 6px; background: #d3d6dd; margin-right: 5px; }
.left { border: 3px solid transparent; border-right: 3px solid #7f8ba6; border-left: 0; margin: 0 10px 0 8px; }
.right { border: 3px solid transparent; border-left: 3px solid #7f8ba6; border-right: 0; margin-right: 12px; }

/* side bar */
.sidebar { flex: none; width: 40px; display: flex; flex-direction: column; align-items: center; border-left: 2px solid #e3e5ea; background: #f5f7f9; padding-left: 4px; }
.handle { width: 20px; height: 4px; border: solid #ccd0d8; border-width: 1px 0; margin: 11px 0 20px; }
.side-tools { display: flex; flex-direction: column; gap: 18px; }
.side-tools button { height: 18px; width: 16px; justify-content: center; }
.side-more { margin: auto 0 0; height: 43px; width: 100%; justify-content: center; border-top: 1px solid #e3e5ea; padding-top: 6px; }

/* status bar */
.statusbar { display: flex; align-items: center; height: 28px; background: #f5f7f9; padding: 0 11px 0 16px; }
.statusbar > .rule { height: 14px; margin: 0 10px 0 14px; }
.payroll { gap: 2px; margin-right: 7px; }
.view-tools { display: flex; align-items: center; margin-left: auto; }
.view-tools .rule { height: 14px; }
.cross { margin: 0 13px 0 7px; gap: 2px; }
.view { width: 24px; height: 24px; margin-right: 1px; justify-content: center; border-radius: 2px; }
.view + .view { margin-left: 1px; }
.rule + .view { margin-left: 10px; }
.view.on { background: #d9dde4; }
.view:nth-last-of-type(5) { margin-right: 10px; }
.zoom-value { margin: 0 13px 0 10px; gap: 2px; }
.zoom { appearance: none; width: 141px; height: 14px; margin: 0 12px; background: linear-gradient(to right, #39435a 50%, #dfe2e8 50%) center / 100% 1px no-repeat; }
.zoom::-webkit-slider-thumb { appearance: none; width: 12px; height: 12px; border: 1px solid #39435a; border-radius: 50%; background: #f5f7f9; }
.view-tools > button:last-child { margin-left: 9px; }

/* floating menus */
.menu { position: absolute; background: #fff; border: 1px solid #d8dee8; box-shadow: 1px 1px 3px #0002; }
.menu button { width: 100%; height: 28px; padding: 0 8px; gap: 9px; }
.menu .short { height: 27px; }
.menu .on { background: #e6e9ee; }
.menu .off { color: #a9acb2; }
.menu .off svg { stroke: #a9acb2; }
.menu hr { margin: 4px 0; border: 0; height: 1px; background: #e2e5ea; }
.blank { width: 16px; }
.more { margin-left: auto; border: 3px solid transparent; border-left: 3px solid #77819b; border-right: 0; }
.context { left: 489px; top: 574px; width: 194px; padding: 2px 0 0; }
.scale { left: 682px; top: 782px; width: 91px; }
.scale button { height: 27px; gap: 10px; }
.scale .blank { width: 15px; }
.pointer { position: absolute; left: 659px; top: 801px; }
.callout { position: absolute; left: 470px; top: 804px; filter: drop-shadow(2px 2px 2px #0008); }
.watermark { position: absolute; right: 10px; bottom: 3px; display: flex; align-items: center; opacity: .85; }
.watermark div { display: flex; flex-direction: column; margin-left: -4px; }
.watermark b { font: 700 21px/26px "Noto Sans CJK SC", sans-serif; color: #5b94d8; }
.watermark span { font: 700 16px/22px "Liberation Sans", sans-serif; color: #63c07c; }
```
